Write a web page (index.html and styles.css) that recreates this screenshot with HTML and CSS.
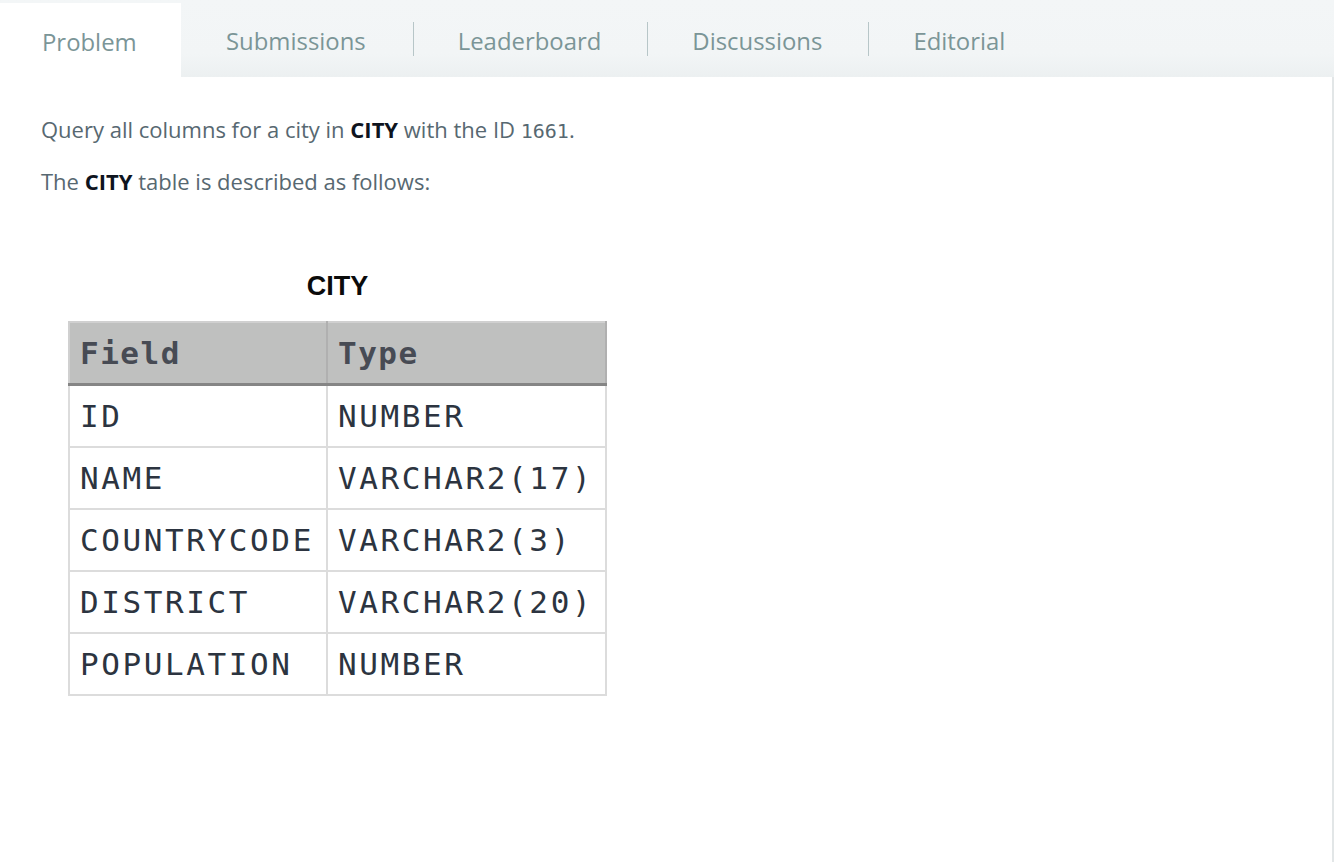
FILE: index.html
```html
<!DOCTYPE html>
<html>
<head>
<meta charset="utf-8">
<link rel="stylesheet" href="styles.css">
</head>
<body>
<div class="page">
  <nav class="tabs">
    <div class="tab active">Problem</div>
    <div class="tab">Submissions</div>
    <div class="tab sep">Leaderboard</div>
    <div class="tab sep">Discussions</div>
    <div class="tab sep">Editorial</div>
  </nav>
  <main class="panel">
    <p class="txt">Query all columns for a city in <b>CITY</b> with the ID <code>1661</code>.</p>
    <p class="txt">The <b>CITY</b> table is described as follows:</p>
    <div class="figure">
      <div class="caption">CITY</div>
      <table class="schema">
        <thead>
          <tr><th class="c1">Field</th><th>Type</th></tr>
        </thead>
        <tbody>
          <tr><td class="c1">ID</td><td>NUMBER</td></tr>
          <tr><td class="c1">NAME</td><td>VARCHAR2(17)</td></tr>
          <tr><td class="c1">COUNTRYCODE</td><td>VARCHAR2(3)</td></tr>
          <tr><td class="c1">DISTRICT</td><td>VARCHAR2(20)</td></tr>
          <tr><td class="c1">POPULATION</td><td>NUMBER</td></tr>
        </tbody>
      </table>
    </div>
  </main>
</div>
</body>
</html>
```

FILE: styles.css
```css
html, body {
  margin: 0;
  padding: 0;
  background: #ffffff;
}
body {
  font-family: "Open Sans", "Liberation Sans", sans-serif;
}
.page {
  width: 1334px;
  height: 862px;
  display: flex;
  flex-direction: column;
}
.tabs {
  height: 77px;
  display: flex;
  align-items: center;
  background: linear-gradient(to bottom, #f3f6f7 0%, #f2f5f6 70%, #ecf0f1 100%);
  flex-shrink: 0;
}
.tab {
  font-size: 23.9px;
  color: #7b9597;
  padding: 4px 46px 0 44px;
  height: 30px;
  line-height: 30px;
  display: flex;
  align-items: center;
}
.tab.sep {
  border-left: 1px solid #b7c6c8;
}
.tab.active {
  align-self: flex-end;
  height: 74px;
  line-height: 74px;
  background: #ffffff;
  padding: 4px 0 0 42px;
  color: #7b9597;
  box-sizing: border-box;
  width: 181px;
}
.tab:nth-child(2) {
  padding-left: 45px;
  padding-right: 47px;
}
.panel {
  flex: 1;
  background: #ffffff;
  border-right: 2px solid #e2e6e7;
  padding: 37px 0 0 41px;
}
.txt {
  margin: 0 0 20px 0;
  font-size: 22px;
  line-height: 30px;
  color: #576871;
}
.txt b {
  color: #0e141e;
  font-weight: 700;
}
.txt code {
  font-family: "DejaVu Sans Mono", "Liberation Mono", monospace;
  font-size: 20px;
  color: #576871;
}
.figure {
  margin-top: 72px;
  margin-left: 27px;
  width: 539px;
}
.caption {
  text-align: center;
  font-family: "Liberation Sans", Arial, sans-serif;
  font-weight: 700;
  font-size: 27px;
  color: #0b0b0b;
  height: 36px;
  line-height: 36px;
  margin-bottom: 17px;
}
.schema {
  border-collapse: collapse;
  width: 539px;
  font-family: "DejaVu Sans Mono", "Liberation Mono", monospace;
  font-size: 31px;
  color: #2c3440;
  letter-spacing: 2.6px;
}
.schema th, .schema td {
  text-align: left;
  height: 60px;
  padding: 0 0 0 10px;
  border: 2px solid #dcdcdc;
  white-space: nowrap;
}
.schema th {
  background: #bfc0bf;
  color: #474b54;
  font-weight: 700;
  letter-spacing: 1.5px;
  border-color: #d0d0d0 #b0b0b0 #8c8c8c #d0d0d0;
  border-bottom: 3px solid #858585;
}
.schema .c1 {
  width: 246px;
}
```
